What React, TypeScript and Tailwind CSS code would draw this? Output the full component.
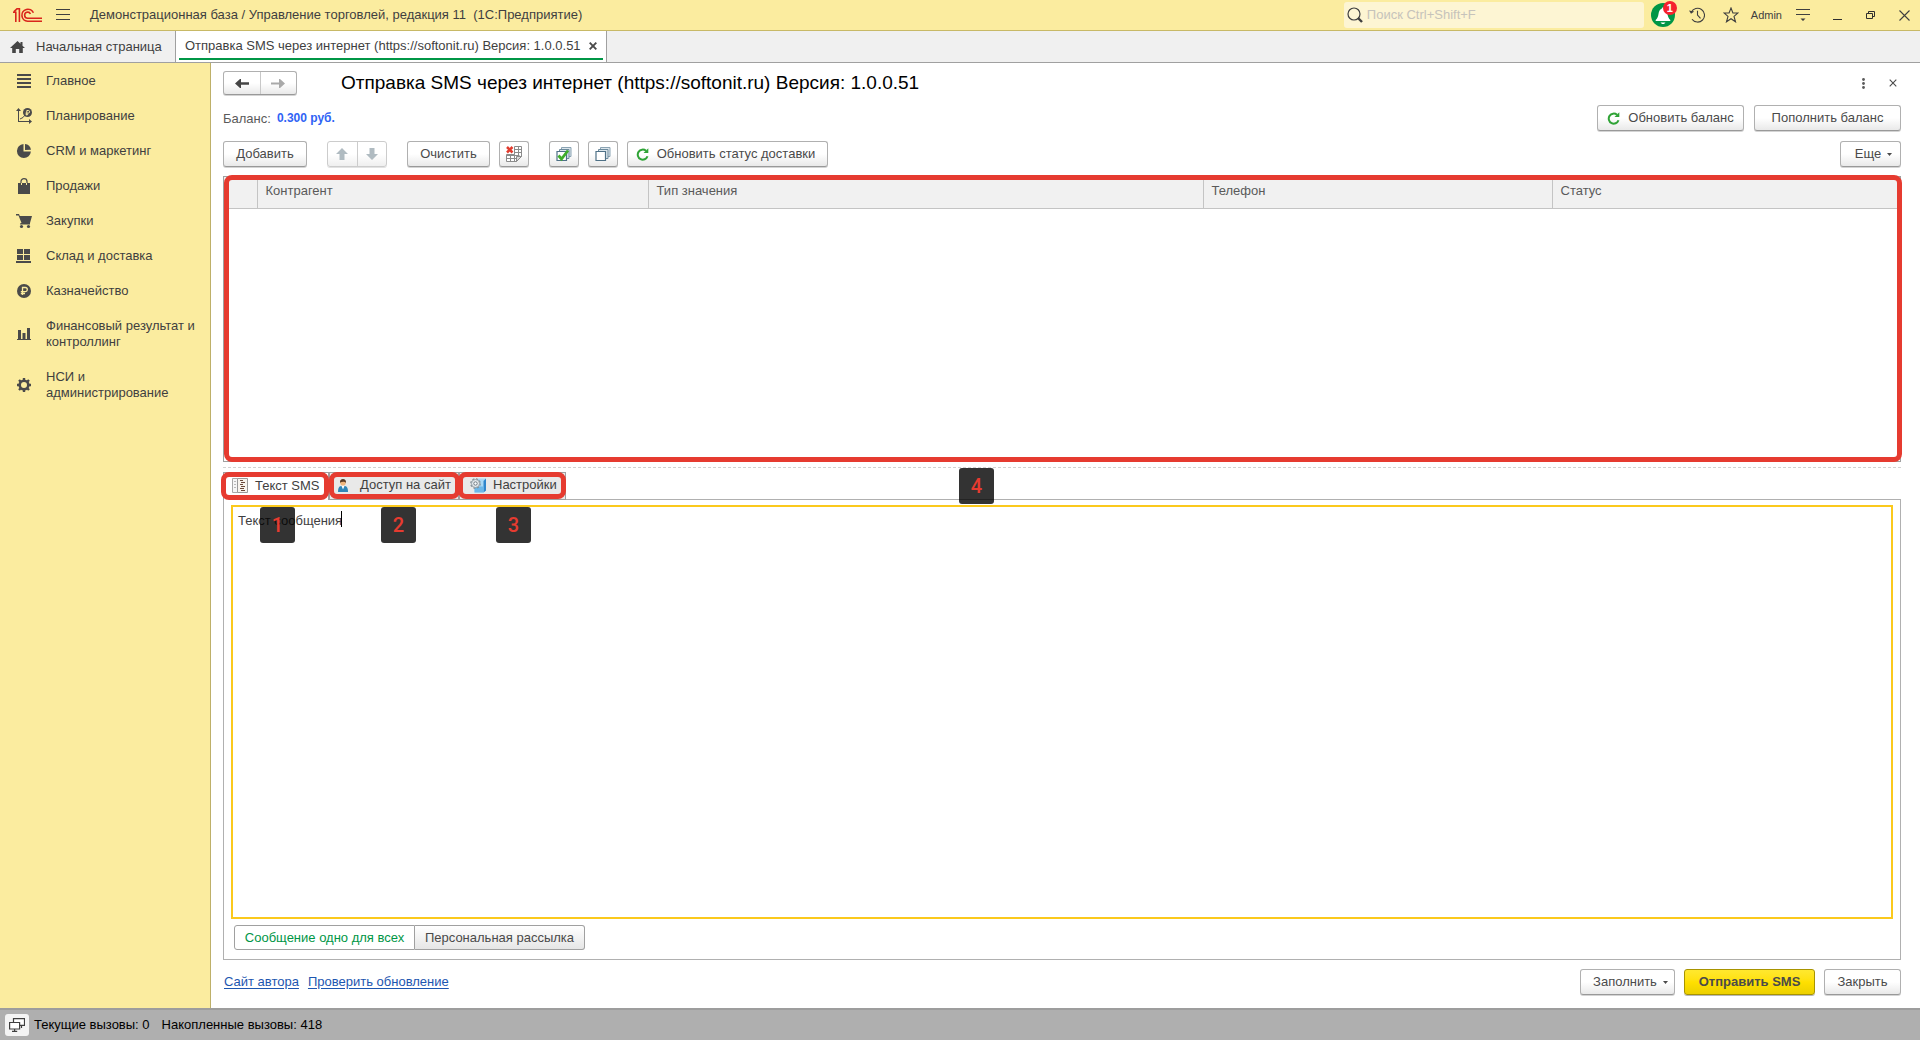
import React from 'react';

// ============================================================================
// ICONS
// ============================================================================

function LogoIcon() {
  return (
    <svg width="29" height="16" viewBox="0 0 29 16" fill="none" stroke="#d9251c" strokeWidth="1.6">
      <path d="M0 5.200h2.800V15M1 4.600 4 1.800h2.400V15" />
      <path d="M20.400 5.800A6 6 0 1 0 14.600 14.200H29" />
      <path d="M17.400 7A3 3 0 1 0 14.600 11.200H29" />
    </svg>
  );
}

function MenuIcon() {
  return (
    <svg width="14" height="12" viewBox="0 0 14 12" fill="#3f3f3f">
      <path d="M0 0h14v1H0zM0 5h14v1H0zM0 10h14v1H0z" />
    </svg>
  );
}

function HomeIcon() {
  return (
    <svg width="15" height="12" viewBox="0 0 15 12" fill="#454545">
      <path d="M7.500 0 0 7h2.200v5h3.600V8h3.400v4h3.600V7H15l-2.500-2.300V1h-2v1.800z" />
    </svg>
  );
}

function SearchIcon() {
  return (
    <svg width="16" height="16" viewBox="0 0 16 16" fill="none" stroke="#3f3f3f">
      <circle cx="7" cy="7" r="6" strokeWidth="1.2" />
      <path d="m11 11 4 4" strokeWidth="2.4" />
    </svg>
  );
}

function BellIcon() {
  return (
    <svg width="24" height="24" viewBox="0 0 24 24">
      <circle cx="12" cy="12" r="12" fill="#009646" />
      <path d="M12 4.5c.8 0 1.2.5 1.3 1.200 2.200.7 2.800 2.600 3.200 5.200.4 2.700 1 4.200 2.800 6.100v1H4.700v-1c1.800-1.900 2.400-3.400 2.800-6.100.4-2.600 1-4.500 3.200-5.200.1-.7.5-1.200 1.300-1.200z" fill="#fff" />
      <path d="M9.500 19.500h5l-1.500 1.500h-2z" fill="#fff" />
    </svg>
  );
}

function HistoryIcon() {
  return (
    <svg width="16" height="16" viewBox="0 0 16 16" fill="none" stroke="#3f3f3f" strokeWidth="1.1">
      <path d="M2.300 5.400A6.900 6.900 0 1 1 3 12.200" />
      <path d="M8.500 3.800V8l3 3.400" />
      <path d="M0 3.500 2 6.800 5.200 4.600z" fill="#3f3f3f" stroke="none" />
    </svg>
  );
}

function StarIcon() {
  return (
    <svg width="16" height="16" viewBox="0 0 16 16" fill="none" stroke="#3f3f3f" strokeWidth="1.1">
      <path d="m8 1 1.900 5H15l-4 3.400 1.500 5.400L8 11.700l-4.500 3.100L5 9.400 1 6h5.100z" />
    </svg>
  );
}

function OptionsIcon() {
  return (
    <svg width="14" height="14" viewBox="0 0 14 14" fill="#3f3f3f">
      <path d="M0 1h14v1H0zM0 6h14v1H0zM4.500 10.500h5L7 13z" />
    </svg>
  );
}

function MinimizeIcon() {
  return (
    <svg width="10" height="10" viewBox="0 0 10 10" fill="#2f2f2f">
      <path d="M0 9h9v1H0z" />
    </svg>
  );
}

function RestoreIcon() {
  return (
    <svg width="10" height="10" viewBox="0 0 10 10" fill="none" stroke="#2f2f2f">
      <path d="M.5 3.500h6v5h-6zM2.500 3.500v-2h6v5h-2" />
    </svg>
  );
}

function CrossIcon() {
  return (
    <svg width="11" height="11" viewBox="0 0 11 11" fill="none" stroke="#3f3f3f" strokeWidth="1.1">
      <path d="m.5.5 10 10m0-10-10 10" />
    </svg>
  );
}

function SmallCrossIcon({ bold = false }: { bold?: boolean }) {
  return (
    <svg width="8" height="8" viewBox="0 0 8 8" fill="none" stroke="#4a4a4a" strokeWidth={bold ? 1.9 : 1.1}>
      <path d="m.7.7 6.600 6.600m0-6.600L.7 7.300" />
    </svg>
  );
}

function RefreshIcon() {
  return (
    <svg width="13" height="13" viewBox="0 0 13 13" fill="none" stroke="#2fa336" strokeWidth="2">
      <path d="M10 2.800A5 5 0 1 0 11.500 8.200" />
      <path d="M12.300.3V5H7.500z" fill="#2fa336" stroke="none" />
    </svg>
  );
}

function CaretIcon() {
  return (
    <svg width="5" height="3" viewBox="0 0 5 3" fill="#4a4a4a">
      <path d="M0 0h5L2.500 3z" />
    </svg>
  );
}

function ArrowIcon({ direction }: { direction: 'left' | 'right' }) {
  return (
    <svg width="14" height="9" viewBox="0 0 14 9" fill={direction === 'left' ? '#454545' : '#a9a9a9'}>
      {direction === 'left' ? (
        <path d="M5 0 0 4.500 5 9h1V5.700h8V3.300H6V0z" />
      ) : (
        <path d="m9 0 5 4.500L9 9H8V5.500H0v-2h8V0z" />
      )}
    </svg>
  );
}

function MoveIcon({ direction }: { direction: 'up' | 'down' }) {
  return (
    <svg width="12" height="12" viewBox="0 0 12 12" fill="#b0bbc1">
      {direction === 'up' ? (
        <path d="m6 0 6 6H8.500v6h-5V6H0z" />
      ) : (
        <path d="M6 12 0 6h3.500V0h5v6H12z" />
      )}
    </svg>
  );
}

function ClearTableIcon() {
  return (
    <svg width="16" height="16" viewBox="0 0 16 16" fill="none" stroke="#8b8b8b">
      <path d="M.5 8.500h8v-8h7v10l-5 5H.5z" fill="#fff" />
      <path d="M8.500 3.500h7M8.500 6.500h7M.5 9.500h13M.5 12.500h10M12.500.5v9M4.500 8.500v7M8.500 8.500v7" />
      <path d="M10.500 15.500v-5h5z" fill="#d9d9d9" />
      <path d="m1 1 5.500 5.500m0-5.500L1 6.500" stroke="#e23c2e" strokeWidth="2.6" />
    </svg>
  );
}

function StackIcon({ checked = false }: { checked?: boolean }) {
  return (
    <svg width="16" height="16" viewBox="0 0 16 16" fill="#fff" stroke="#4f7187">
      <path d="M5.500 1.500H15v9H5.500z" fill="#dce6ec" stroke="#8aa3b3" />
      <path d="M3.500 3.500H13v9H3.500z" fill="#dce6ec" stroke="#6c8a9d" />
      <path d="M1 5.500h9.500v9H1z" strokeWidth="1.2" />
      {checked && <path d="m2.500 9.500 3 3.500 6.500-8.500" fill="none" stroke="#3fae2a" strokeWidth="2.8" />}
    </svg>
  );
}

function TextTabIcon() {
  return (
    <svg width="16" height="15" viewBox="0 0 16 15" fill="none">
      <path d="M.5.5h5v14h-5z" fill="#f6f6f6" stroke="#a8a8a8" />
      <path d="M5.500.5h10v14h-10z" fill="#f8f4ee" stroke="#9a9a9a" />
      <path d="M2 3.500h2M2 6.500h2M2 9.500h2" stroke="#b8b8b8" />
      <path d="M8 2.500h3M9 4.500h4M8 6.500h3M9 8.500h4M8 10.500h4M9 12.500h4" stroke="#6b4a3a" />
    </svg>
  );
}

function UserTabIcon() {
  return (
    <svg width="10" height="13" viewBox="0 0 10 13">
      <path d="M0 13c0-4 1-5.500 3-6h4c2 .5 3 2 3 6z" fill="#2f86b8" />
      <path d="M3.500 7h3L5 10.500z" fill="#fff" />
      <circle cx="5" cy="3.800" r="2.800" fill="#f0b67c" />
      <path d="M2 3.800C1.800 1.200 3 0 5 0s3.200 1.200 3 3.800C7 2.500 4 2 2 3.800z" fill="#5a3a24" />
    </svg>
  );
}

function SettingsTabIcon() {
  return (
    <svg width="17" height="15" viewBox="0 0 17 15">
      <path d="M6 2.500 8.500.5H16v12l-2.500 2H4.500V9z" fill="#a9d8f5" />
      <path d="M13.500 3 16 .5v12l-2.500 2z" fill="#2f86cc" />
      <path d="M6 8.500h7.500v6h-9V10z" fill="#6db7e8" />
      <circle cx="5.500" cy="5.500" r="4.600" fill="none" stroke="#7f8b93" strokeWidth="1.400" strokeDasharray="2 1.600" />
      <circle cx="5.500" cy="5.500" r="4" fill="#e6eaed" stroke="#8a959c" strokeWidth=".8" />
      <circle cx="5.500" cy="5.500" r="1.700" fill="#fff" stroke="#6d7880" />
    </svg>
  );
}

function WindowsIcon() {
  return (
    <svg width="16" height="14" viewBox="0 0 16 14" fill="#fff" stroke="#3f3f3f" strokeWidth="1.2">
      <path d="M4.500.6h11v6.800h-11z" />
      <path d="M.6 4.500h10v6.500h-10z" />
      <path d="M5.600 11v2M3 13.400h5.200M12.500 7.500v2.500" />
    </svg>
  );
}

// Sections panel icons, all drawn on a 16x16 box
const sectionIcons = {
  main: <path d="M1 1h14v2H1zM1 5h14v2H1zM1 9h14v2H1zM1 13h14v2H1z" />,
  planning: (
    <>
      <path d="M2 2h1v11h10v1H2zM0 3l2.500-3L5 3zM13 11l3 2.500-3 2.500z" />
      <path d="m4 11 3-1.500 2-2.500 1-1" fill="none" stroke="#4a4a4a" />
      <circle cx="11.500" cy="4.500" r="4.500" />
      <path d="M10.800 7.500v-5h1.500a1.200 1.200 0 0 1 0 2.600H9.600M9.600 6.300h2.500" fill="none" stroke="#fbec9f" />
    </>
  ),
  crm: <path d="M7.500 1v7.500h7.400A7 7 0 1 1 7.500 1zM9 1a7 7 0 0 1 6 5.800L9 7z" />,
  sales: (
    <>
      <path d="M2 5h12v11H2z" />
      <path d="M5 8V3.500a3 2.800 0 0 1 6 0V8" fill="none" stroke="#4a4a4a" strokeWidth="1.2" />
      <path d="M5.500 7V5M10.500 7V5" stroke="#fbec9f" />
    </>
  ),
  purchases: (
    <>
      <path d="M0 1h3l.8 2H16l-2 7H5.500L2.500 2.500H0zM4.500 10h9.500v1.500H4z" />
      <circle cx="5.500" cy="13.500" r="1.600" />
      <circle cx="12.500" cy="13.500" r="1.600" />
    </>
  ),
  warehouse: <path d="M1 1h6v5H1zM8 1h6v5H8zM1 7h6v5H1zM8 7h6v5H8zM0 13h15v2H0z" />,
  treasury: (
    <>
      <circle cx="8" cy="8" r="7" />
      <path d="M6.500 12V4.500h2.700a2 2 0 0 1 0 4.200H4.800M4.800 10.500H9" fill="none" stroke="#fbec9f" strokeWidth="1.3" />
    </>
  ),
  finance: <path d="M2 4h3v9H2zM6.500 7h3v6h-3zM11 2h3v11h-3zM1 13h14v1H1z" />,
  admin: (
    <>
      <circle cx="8" cy="8" r="4.300" fill="none" stroke="#4a4a4a" strokeWidth="2.6" />
      <path d="M8 1v3M8 12v3M1 8h3M12 8h3M3 3l2 2M11 11l2 2M3 13l2-2M11 5l2-2" stroke="#4a4a4a" strokeWidth="2.4" />
    </>
  ),
};

// ============================================================================
// DATA
// ============================================================================

const sections: { icon: keyof typeof sectionIcons; title: string }[] = [
  { icon: 'main', title: 'Главное' },
  { icon: 'planning', title: 'Планирование' },
  { icon: 'crm', title: 'CRM и маркетинг' },
  { icon: 'sales', title: 'Продажи' },
  { icon: 'purchases', title: 'Закупки' },
  { icon: 'warehouse', title: 'Склад и доставка' },
  { icon: 'treasury', title: 'Казначейство' },
  { icon: 'finance', title: 'Финансовый результат и контроллинг' },
  { icon: 'admin', title: 'НСИ и администрирование' },
];

const FORM_TITLE = 'Отправка SMS через интернет (https://softonit.ru) Версия: 1.0.0.51';

// ============================================================================
// SHARED PARTS
// ============================================================================

function FormButton({
  children,
  className = '',
  label,
}: {
  children: React.ReactNode;
  className?: string;
  label?: string;
}) {
  return (
    <button
      type="button"
      aria-label={label}
      className={`flex h-[26px] shrink-0 items-center justify-center rounded-[3px] border border-[#b0b0b0] border-b-[#999999] bg-gradient-to-b from-white from-50% to-[#e9e9e9] whitespace-nowrap text-[#4a4a4a] shadow-[0_1px_0_#d4d4d4] ${className}`}
    >
      {children}
    </button>
  );
}

function Callout({ children, className }: { children: React.ReactNode; className: string }) {
  return (
    <span
      className={`pointer-events-none absolute z-20 flex h-9 w-[35px] items-center justify-center rounded-[3px] bg-black/80 font-[Roboto,sans-serif] text-[20px] font-medium text-[#e63b30] ${className}`}
    >
      {children}
    </span>
  );
}

function Frame({ className }: { className: string }) {
  return (
    <span className={`pointer-events-none absolute z-10 rounded-lg border-5 border-[#e63b30] ${className}`} />
  );
}

// ============================================================================
// WINDOW PARTS
// ============================================================================

function TitleBar() {
  return (
    <header className="flex h-[31px] shrink-0 items-center border-b border-[#c8b966] bg-[#fbec9f] pr-2.5 pl-[13px]">
      <LogoIcon />
      <button type="button" aria-label="Меню" className="ml-3.5">
        <MenuIcon />
      </button>
      <span className="ml-5 whitespace-pre">
        Демонстрационная база / Управление торговлей, редакция 11  (1С:Предприятие)
      </span>
      <label className="mr-[7px] ml-auto flex h-[26px] w-[300px] items-center gap-1 rounded-[3px] bg-[#fdf5d3] px-[3px]">
        <SearchIcon />
        <input
          type="text"
          aria-label="Поиск"
          placeholder="Поиск Ctrl+Shift+F"
          className="min-w-0 flex-1 bg-transparent outline-none placeholder:text-[#c6c3bb]"
        />
      </label>
      <button type="button" aria-label="Уведомления" className="relative">
        <BellIcon />
        <span className="absolute -top-0.5 -right-0.5 flex h-3.5 w-3.5 items-center justify-center rounded-full bg-[#f5222d] text-[11px] font-bold text-white">
          1
        </span>
      </button>
      <button type="button" aria-label="История" className="ml-3.5">
        <HistoryIcon />
      </button>
      <button type="button" aria-label="Избранное" className="ml-[18px]">
        <StarIcon />
      </button>
      <span className="ml-3 text-[11px]">Admin</span>
      <button type="button" aria-label="Настройки окна" className="ml-3.5">
        <OptionsIcon />
      </button>
      <button type="button" aria-label="Свернуть" className="ml-[23px]">
        <MinimizeIcon />
      </button>
      <button type="button" aria-label="Восстановить" className="ml-[23px]">
        <RestoreIcon />
      </button>
      <button type="button" aria-label="Закрыть окно" className="ml-[23px]">
        <CrossIcon />
      </button>
    </header>
  );
}

function WindowTabs() {
  return (
    <nav className="flex h-8 shrink-0 border-b border-[#a0a0a0] bg-[#f0f0f0]">
      <button type="button" className="flex w-[175px] items-center gap-[11px] pl-2.5">
        <HomeIcon />
        Начальная страница
      </button>
      <div className="flex border-x border-[#a0a0a0] bg-white px-[3px] pb-0.5">
        <div className="flex items-center gap-2 border-b-2 border-[#009646] px-1.5 pt-0.5">
          <span>{FORM_TITLE}</span>
          <button type="button" aria-label="Закрыть вкладку">
            <SmallCrossIcon bold />
          </button>
        </div>
      </div>
    </nav>
  );
}

function Sidebar() {
  return (
    <aside className="flex w-[211px] shrink-0 flex-col gap-[19px] border-r border-[#beb069] bg-[#fbec9f] pt-2.5 pr-2 pl-4">
      {sections.map((section) => (
        <button
          key={section.icon}
          type="button"
          className="flex items-center gap-3.5 text-left leading-4"
        >
          <svg width="16" height="16" viewBox="0 0 16 16" fill="#4a4a4a" className="shrink-0">
            {sectionIcons[section.icon]}
          </svg>
          <span>{section.title}</span>
        </button>
      ))}
    </aside>
  );
}

function FormHeader() {
  return (
    <>
      <div className="flex h-6 items-center">
        <div className="flex h-6 w-[74px] rounded-[3px] border border-[#b0b0b0] border-b-[#999999] bg-gradient-to-b from-white from-50% to-[#e9e9e9] shadow-[0_1px_0_#d4d4d4]">
          <button type="button" aria-label="Назад" className="flex flex-1 items-center justify-center border-r border-[#c8c8c8]">
            <ArrowIcon direction="left" />
          </button>
          <button type="button" aria-label="Вперед" className="flex flex-1 items-center justify-center">
            <ArrowIcon direction="right" />
          </button>
        </div>
        <h1 className="ml-11 text-[19px] text-black">{FORM_TITLE}</h1>
        <button type="button" aria-label="Действия" className="ml-auto">
          <svg width="3" height="11" viewBox="0 0 3 11" fill="#5a5a5a">
            <circle cx="1.5" cy="1.5" r="1.4" />
            <circle cx="1.5" cy="5.5" r="1.4" />
            <circle cx="1.5" cy="9.5" r="1.4" />
          </svg>
        </button>
        <button type="button" aria-label="Закрыть форму" className="mr-1 ml-6">
          <SmallCrossIcon />
        </button>
      </div>
      <div className="mt-2.5 flex items-center gap-2.5">
        <span className="pt-0.5 text-[#5a5a5a]">Баланс:</span>
        <span className="-ml-1 flex-1 text-[12px] font-bold text-[#2f63f5]">0.300 руб.</span>
        <FormButton className="w-[147px] gap-2">
          <RefreshIcon />
          <span>Обновить баланс</span>
        </FormButton>
        <FormButton className="w-[147px]">Пополнить баланс</FormButton>
      </div>
    </>
  );
}

function Toolbar() {
  return (
    <div className="mt-2.5 flex items-center">
      <FormButton className="w-[84px]">Добавить</FormButton>
      <div className="ml-5 flex h-[26px] w-[60px] rounded-[3px] border border-[#cccccc] bg-gradient-to-b from-white from-50% to-[#efefef] shadow-[0_1px_0_#e2e2e2]">
        <button type="button" aria-label="Переместить вверх" className="flex flex-1 items-center justify-center border-r border-[#cccccc]">
          <MoveIcon direction="up" />
        </button>
        <button type="button" aria-label="Переместить вниз" className="flex flex-1 items-center justify-center">
          <MoveIcon direction="down" />
        </button>
      </div>
      <FormButton className="ml-5 w-[83px]">Очистить</FormButton>
      <FormButton label="Удалить строки" className="ml-[9px] w-[30px]">
        <ClearTableIcon />
      </FormButton>
      <FormButton label="Установить флажки" className="ml-5 w-[30px]">
        <StackIcon checked />
      </FormButton>
      <FormButton label="Снять флажки" className="ml-[9px] w-[30px]">
        <StackIcon />
      </FormButton>
      <FormButton className="ml-[9px] w-[201px] gap-2">
        <RefreshIcon />
        <span className="pr-1">Обновить статус доставки</span>
      </FormButton>
      <FormButton className="ml-auto w-[61px] gap-1.5 pl-1.5">
        Еще
        <CaretIcon />
      </FormButton>
    </div>
  );
}

function RecipientsTable() {
  return (
    <div className="relative mt-[9px] h-[286px] border border-[#a0a0a0]">
      <table className="w-full table-fixed border-collapse text-left text-[#5a5a5a]">
        <thead>
          <tr className="h-[31px] border-b border-[#c4c4c4] bg-[#f1f1f1]">
            <th aria-label="Номер" className="w-[33px] border-r border-[#c4c4c4]" />
            <th className="w-[391px] border-r border-[#c4c4c4] px-2 pb-0.5 font-normal">Контрагент</th>
            <th className="w-[555px] border-r border-[#c4c4c4] px-2 pb-0.5 font-normal">Тип значения</th>
            <th className="w-[349px] border-r border-[#c4c4c4] px-2 pb-0.5 font-normal">Телефон</th>
            <th className="px-2 pb-0.5 font-normal">Статус</th>
          </tr>
        </thead>
        <tbody />
      </table>
      <Frame className="-top-0.5 -right-0.5 -bottom-px left-0" />
    </div>
  );
}

function PageTabs() {
  return (
    <div className="relative z-10 -mb-px flex h-7 text-[#3f3f3f]">
      <button type="button" className="relative flex w-[106px] items-center gap-[7px] border border-b-0 border-[#a0a0a0] bg-white pb-0.5 pl-2">
        <TextTabIcon />
        Текст SMS
        <Frame className="-top-px -right-px bottom-0 -left-[3px]" />
        <Callout className="top-[34px] left-9">1</Callout>
      </button>
      <button type="button" className="relative flex w-[130px] items-center gap-3 border border-[#a0a0a0] bg-[#e9e9e9] pb-0.5 pl-2">
        <UserTabIcon />
        Доступ на сайт
        <Frame className="-top-px -right-0.5 bottom-0 -left-px" />
        <Callout className="top-[34px] left-[51px]">2</Callout>
      </button>
      <button type="button" className="relative flex w-[107px] items-center gap-1.5 border border-[#a0a0a0] bg-[#e9e9e9] pb-0.5 pl-2.5">
        <SettingsTabIcon />
        Настройки
        <Frame className="-top-px -right-px bottom-0 -left-0.5" />
        <Callout className="top-[34px] left-9">3</Callout>
      </button>
      <Callout className="-top-1 left-[736px]">4</Callout>
    </div>
  );
}

function MessagePanel() {
  return (
    <div className="flex flex-1 flex-col border border-[#b0b0b0] p-[7px] pt-[5px] pb-[9px]">
      <div className="relative flex flex-1">
        <textarea
          aria-label="Текст сообщения"
          defaultValue="Текст сообщения"
          className="flex-1 resize-none border-2 border-[#fbc91c] px-[5px] py-1.5 leading-4 text-[#3f3f3f] outline-none"
        />
        <span className="absolute top-1.5 left-[110px] h-4 w-px bg-black" />
      </div>
      <div className="mt-1.5 ml-[3px] flex h-[25px]">
        <button type="button" className="w-[181px] rounded-l-[3px] border border-[#a0a0a0] bg-white text-[#009646]">
          Сообщение одно для всех
        </button>
        <button type="button" className="w-[170px] rounded-r-[3px] border border-l-0 border-[#a0a0a0] bg-gradient-to-b from-white to-[#e6e6e6] text-[#4a4a4a]">
          Персональная рассылка
        </button>
      </div>
    </div>
  );
}

function FormFooter() {
  return (
    <div className="mt-[9px] flex items-center gap-[9px]">
      <a href="#site" className="ml-px text-[#1d56b0] underline underline-offset-2">
        Сайт автора
      </a>
      <a href="#update" className="text-[#1d56b0] underline underline-offset-2">
        Проверить обновление
      </a>
      <FormButton className="ml-auto w-[95px] gap-1.5 pl-1.5">
        Заполнить
        <CaretIcon />
      </FormButton>
      <button
        type="button"
        className="h-[26px] w-[131px] rounded-[3px] border border-[#a89400] bg-gradient-to-b from-[#ffe82e] via-[#ffe000] to-[#ecd000] font-bold text-[#4a4a4a] shadow-[0_1px_0_#b8b8b8]"
      >
        Отправить SMS
      </button>
      <FormButton className="w-[77px]">Закрыть</FormButton>
    </div>
  );
}

function StatusBar() {
  return (
    <footer className="flex h-8 shrink-0 items-center border-t-2 border-[#9d9d9d] bg-[#afafaf] pl-[5px] text-black">
      <button type="button" aria-label="Окна" className="flex h-[22px] w-6 items-center justify-center rounded-[3px] bg-[#f4f4f4]">
        <WindowsIcon />
      </button>
      <span className="ml-[5px]">Текущие вызовы: 0</span>
      <span className="ml-3">Накопленные вызовы: 418</span>
    </footer>
  );
}

export default function App() {
  return (
    <div className="flex min-h-screen flex-col bg-white font-['Liberation_Sans',Arial,sans-serif] text-[13px] leading-4 text-[#3f3f3f]">
      <TitleBar />
      <WindowTabs />
      <div className="flex flex-1">
        <Sidebar />
        <main className="flex min-w-0 flex-1 flex-col pt-2 pr-[19px] pb-[13px] pl-3">
          <FormHeader />
          <Toolbar />
          <RecipientsTable />
          <div className="mt-[5px] mb-1 border-t border-dashed border-[#d2d2d2]" />
          <PageTabs />
          <MessagePanel />
          <FormFooter />
        </main>
      </div>
      <StatusBar />
    </div>
  );
}
